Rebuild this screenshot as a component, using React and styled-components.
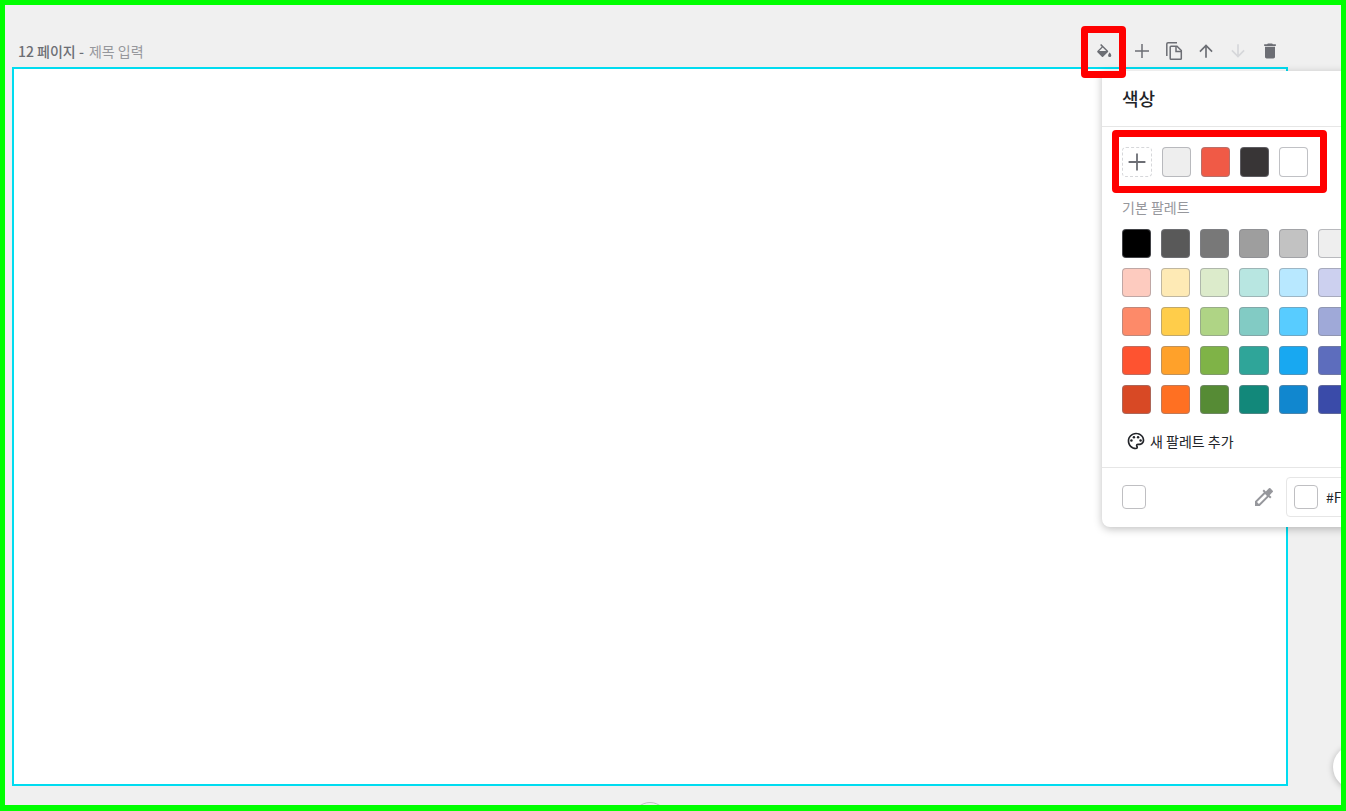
import { createGlobalStyle, styled } from "styled-components";
import {
  MdArrowDownward,
  MdArrowUpward,
  MdColorize,
  MdDelete,
  MdOutlinePalette,
} from "react-icons/md";

const documentColors = ["#eeeeee", "#f05a46", "#383536", "#ffffff"];

const palette = [
  ["#000000", "#595959", "#787878", "#9e9e9e", "#c2c2c2", "#eeeeee", "#ffffff"],
  ["#fdcbbf", "#feeab5", "#dcebcb", "#b8e6e1", "#b8e8ff", "#ccd0ef", "#f4c9dc"],
  ["#fd8a69", "#ffcd4a", "#afd485", "#82cbc4", "#58ccff", "#9fa9d8", "#ee95b8"],
  ["#fe5330", "#ffa12a", "#7fb347", "#2fa599", "#18a8f1", "#5d6dbd", "#d85b8a"],
  ["#d84925", "#ff7022", "#568b35", "#12887a", "#1187cf", "#3a4ba9", "#b2356b"],
];

const GlobalStyle = createGlobalStyle`
  * {
    box-sizing: border-box;
  }

  body {
    margin: 0;
  }

  body, button, input {
    font-family: "Noto Sans CJK KR", "Noto Sans", sans-serif;
  }
`;

const Workspace = styled.main`
  position: relative;
  display: flex;
  flex-direction: column;
  min-height: 100vh;
  padding: 30px 53px 19px 7px;
  border: 5px solid #00ff00;
  border-bottom-width: 6px;
  background-color: #f0f0f0;
  overflow: hidden;
`;

const PageHeader = styled.header`
  display: flex;
  align-items: center;
  justify-content: space-between;
  height: 32px;
  padding: 0 2px 0 6px;
`;

const PageTitle = styled.h1`
  display: flex;
  gap: 5px;
  margin: 0;
  font-size: 14px;
  line-height: 20px;
  font-weight: 500;
  color: #6c6e74;
`;

const TitleHint = styled.span`
  font-weight: 400;
  color: #96979c;
`;

const Toolbar = styled.div`
  display: flex;
`;

const ColorTool = styled.div`
  position: relative;
  margin-right: 6px;
`;

const IconButton = styled.button`
  display: flex;
  align-items: center;
  justify-content: center;
  width: 32px;
  height: 32px;
  padding: 0;
  border: 0;
  background: none;
  color: #6c6e74;
  font-size: 20px;

  &:disabled {
    color: #d6d7da;
  }
`;

const Highlight = styled.div`
  position: absolute;
  z-index: 3;
  inset: ${({ $inset }) => $inset};
  border: 7px solid #ff0000;
  border-radius: 4px;
  pointer-events: none;
`;

const Canvas = styled.section`
  flex: 1;
  border: 2px solid #00dcf0;
  background-color: #ffffff;
`;

const Panel = styled.section`
  position: absolute;
  z-index: 2;
  top: calc(100% + 4px);
  left: 14px;
  width: 304px;
  border-radius: 0 0 8px 8px;
  background-color: #ffffff;
  color: #222429;
  box-shadow: 0 2px 8px rgba(0, 0, 0, 0.25);
`;

const PanelTitle = styled.h2`
  margin: 0;
  padding: 14px 20px;
  border-bottom: 1px solid #e6e6e6;
  font-size: 18px;
  line-height: 27px;
  font-weight: 500;
`;

const PanelBody = styled.div`
  padding: 20px 20px 10px;
  border-bottom: 1px solid #e6e6e6;
`;

const DocumentColors = styled.div`
  position: relative;
  display: flex;
  gap: 10px;
`;

const SwatchGrid = styled.div`
  display: grid;
  grid-template-columns: repeat(7, 1fr);
  gap: 10px;
`;

const Swatch = styled.button`
  min-width: 29px;
  height: ${({ $tall }) => ($tall ? "30px" : "29px")};
  padding: 0;
  border: 1px solid rgba(130, 132, 140, 0.5);
  border-radius: 4px;
  background-color: ${({ $color }) => $color};
`;

const AddSwatch = styled.button`
  display: flex;
  align-items: center;
  justify-content: center;
  width: 30px;
  height: 30px;
  padding: 0;
  border: 1px dashed #d6d7da;
  border-radius: 4px;
  background: none;
  color: #6c6e74;
  font-size: 24px;
`;

const PaletteLabel = styled.h3`
  margin: 20px 0 11px;
  font-size: 14px;
  line-height: 21px;
  font-weight: 400;
  color: #96979c;
`;

const NewPaletteButton = styled.button`
  display: flex;
  align-items: center;
  gap: 4px;
  height: 32px;
  margin-top: 11px;
  padding: 0 4px;
  border: 0;
  background: none;
  color: #222429;
  font-size: 14px;
  line-height: 20px;

  svg {
    font-size: 20px;
  }
`;

const PanelFooter = styled.div`
  display: flex;
  align-items: center;
  padding: 9px 20px 10px;
`;

const Chip = styled.button`
  flex: none;
  width: 24px;
  height: 24px;
  padding: 0;
  border: 1px solid #bfbfc2;
  border-radius: 4px;
  background-color: #ffffff;
`;

const PickerButton = styled(IconButton)`
  margin-left: 102px;
  margin-right: 6px;
  color: #96979c;
  font-size: 24px;
`;

const HexField = styled.label`
  display: flex;
  flex: 1;
  align-items: center;
  gap: 8px;
  height: 40px;
  padding: 0 7px;
  border: 1px solid #e6e6e6;
  border-radius: 4px;
`;

const HexInput = styled.input`
  width: 100%;
  min-width: 0;
  padding: 0;
  border: 0;
  outline: 0;
  background: none;
  color: #222429;
  font-size: 14px;
`;

const HelpButton = styled.button`
  position: absolute;
  right: -36px;
  bottom: 16px;
  width: 44px;
  height: 44px;
  border: 0;
  border-radius: 50%;
  background-color: #ffffff;
  box-shadow: 0 1px 6px rgba(0, 0, 0, 0.25);
`;

const MoreButton = styled.button`
  position: absolute;
  bottom: -33px;
  left: calc(50% - 41px);
  width: 36px;
  height: 36px;
  border: 1px solid #bfbfc2;
  border-radius: 50%;
  background-color: #f0f0f0;
`;

const BucketIcon = () => (
  <svg width="16" height="16" viewBox="0 0 16 16" fill="currentColor">
    <path d="M12 7.7 5.2 1 4.1 2.1l1.6 1.6-4.3 4.3a.9.9 0 0 0 0 1.2l4.5 4.5a.9.900 0 0 0 1.200 0L12 8.900a.9.900 0 0 0 0-1.200zM3.200 8.100l3.500-3.500 3.500 3.500z" />
    <path d="M13.700 9.600s-1.600 1.800-1.600 2.900a1.600 1.600 0 0 0 3.200 0c0-1.100-1.600-2.900-1.600-2.900z" />
  </svg>
);

const PlusIcon = () => (
  <svg
    width="1em"
    height="1em"
    viewBox="0 0 20 20"
    fill="none"
    stroke="currentColor"
    strokeWidth="1.5"
  >
    <path d="M10 3v14M3 10h14" />
  </svg>
);

const CopyIcon = () => (
  <svg
    width="20"
    height="20"
    viewBox="0 0 20 20"
    fill="none"
    stroke="currentColor"
    strokeWidth="1.5"
  >
    <path d="M2.800 15V3q0-1.300 1.300-1.300H13" />
    <path d="M7 5.200h6l4.300 4.300v8q0 .8-.8.8H7q-.8 0-.8-.8V6q0-.8.8-.8z" />
    <path d="M12 5.500V10.500h5" />
  </svg>
);

const ColorPanel = () => (
  <Panel>
    <PanelTitle>색상</PanelTitle>
    <PanelBody>
      <DocumentColors>
        <AddSwatch aria-label="색상 추가">
          <PlusIcon />
        </AddSwatch>
        {documentColors.map((color) => (
          <Swatch key={color} $color={color} $tall aria-label={color} />
        ))}
        <Highlight $inset="-17px 59px -16px -10px" />
      </DocumentColors>
      <PaletteLabel>기본 팔레트</PaletteLabel>
      <SwatchGrid>
        {palette.flat().map((color, index) => (
          <Swatch key={index} $color={color} aria-label={color} />
        ))}
      </SwatchGrid>
      <NewPaletteButton>
        <MdOutlinePalette />새 팔레트 추가
      </NewPaletteButton>
    </PanelBody>
    <PanelFooter>
      <Chip aria-label="현재 색상" />
      <PickerButton aria-label="스포이트">
        <MdColorize />
      </PickerButton>
      <HexField>
        <Chip as="span" />
        <HexInput defaultValue="#FFFFFF" aria-label="색상 코드" />
      </HexField>
    </PanelFooter>
  </Panel>
);

export default function App() {
  return (
    <>
      <GlobalStyle />
      <Workspace>
        <PageHeader>
          <PageTitle>
            12 페이지 - <TitleHint>제목 입력</TitleHint>
          </PageTitle>
          <Toolbar>
            <ColorTool>
              <IconButton aria-label="배경 색상">
                <BucketIcon />
              </IconButton>
              <Highlight $inset="-9px -6px -11px -7px" />
              <ColorPanel />
            </ColorTool>
            <IconButton aria-label="페이지 추가">
              <PlusIcon />
            </IconButton>
            <IconButton aria-label="페이지 복제">
              <CopyIcon />
            </IconButton>
            <IconButton aria-label="위로 이동">
              <MdArrowUpward />
            </IconButton>
            <IconButton disabled aria-label="아래로 이동">
              <MdArrowDownward />
            </IconButton>
            <IconButton aria-label="페이지 삭제">
              <MdDelete />
            </IconButton>
          </Toolbar>
        </PageHeader>
        <Canvas />
        <MoreButton aria-label="더 보기" />
        <HelpButton aria-label="도움말" />
      </Workspace>
    </>
  );
}
